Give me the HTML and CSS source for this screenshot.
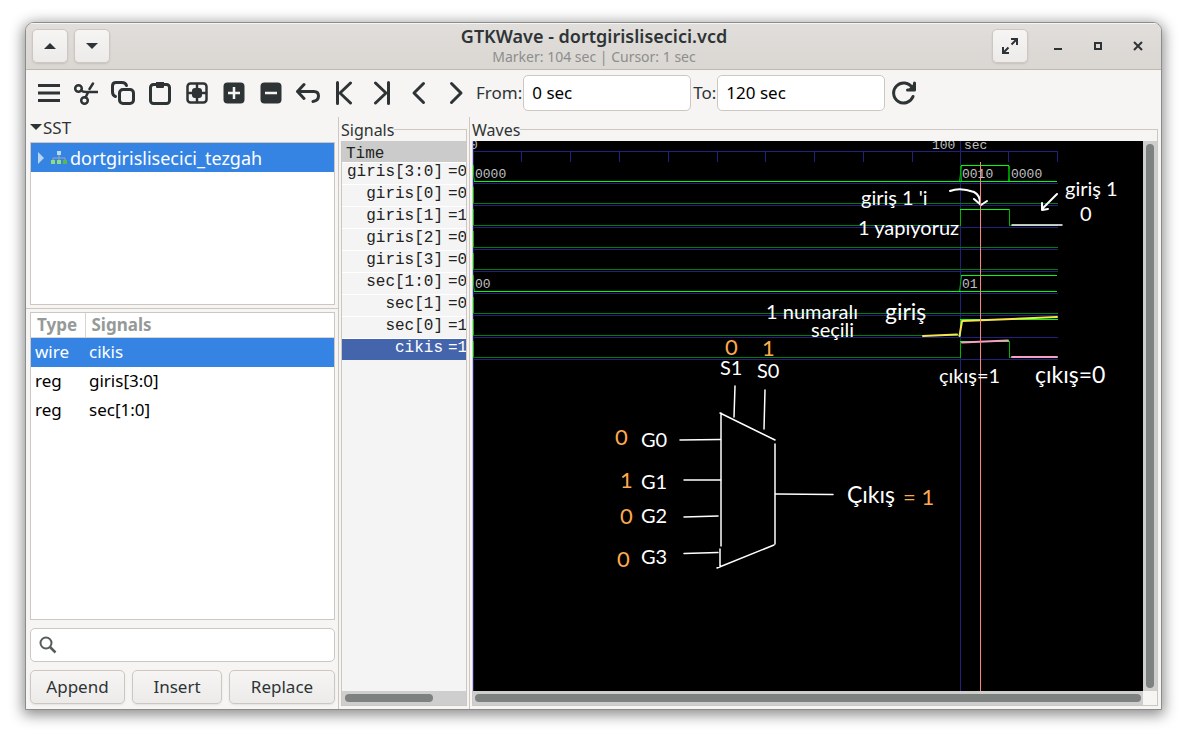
FILE: index.html
```html
<!DOCTYPE html>
<html lang="en">
<head>
<meta charset="utf-8">
<title>GTKWave - dortgirislisecici.vcd</title>
<link rel="stylesheet" href="styles.css">
</head>
<body>
<main class="window">
  <header class="titlebar">
    <div class="title-side">
      <button class="hbtn" aria-label="Previous"><svg width="12" height="12" viewBox="0 0 12 12"><path d="M0 9L6 3L12 9Z" fill="#2e3436"/></svg></button>
      <button class="hbtn" aria-label="Next"><svg width="12" height="12" viewBox="0 0 12 12"><path d="M0 3L6 9L12 3Z" fill="#2e3436"/></svg></button>
    </div>
    <div class="title-text">
      <h1 class="title">GTKWave - dortgirislisecici.vcd</h1>
      <p class="subtitle">Marker: 104 sec&nbsp;|&nbsp;Cursor: 1 sec</p>
    </div>
    <div class="title-side title-end">
      <button class="hbtn" aria-label="Fullscreen"><svg width="16" height="16" viewBox="0 0 16 16" fill="none" stroke="#2e3436" stroke-width="2"><path d="M9 1H15V7M15 1L9.500 6.500M7 15H1V9M1 15L6.500 9.500"/></svg></button>
      <button class="wbtn" aria-label="Minimize"><svg width="16" height="16" viewBox="0 0 16 16"><path d="M4 10H12V12H4Z" fill="#2e3436"/></svg></button>
      <button class="wbtn" aria-label="Maximize"><svg width="16" height="16" viewBox="0 0 16 16" fill="none" stroke="#2e3436" stroke-width="2"><path d="M5 5H11V11H5Z"/></svg></button>
      <button class="wbtn" aria-label="Close"><svg width="16" height="16" viewBox="0 0 16 16" fill="none" stroke="#2e3436" stroke-width="2"><path d="M4 4L12 12M12 4L4 12"/></svg></button>
    </div>
  </header>

  <div class="toolbar">
    <button class="tool" aria-label="Menu"><svg viewBox="0 0 24 24" class="butt"><path d="M1 4.500H23M1 12H23M1 19.500H23"/></svg></button>
    <button class="tool" aria-label="Cut"><svg viewBox="0 0 24 24" class="thin"><circle cx="4.500" cy="7.500" r="3.300"/><circle cx="10.500" cy="19.500" r="3.300"/><path d="M7 9.500Q9 11 12 11H23.500M11.500 16.500L14 11.500M15.500 8L19 2.500"/></svg></button>
    <button class="tool" aria-label="Copy"><svg viewBox="0 0 24 24"><rect x="8.500" y="8.500" width="14" height="14" rx="3.500"/><path d="M4.500 15.500Q1.500 14.500 1.500 11V5Q1.500 1.500 5 1.500H11Q14.500 1.500 15.500 4.500"/></svg></button>
    <button class="tool" aria-label="Paste"><svg viewBox="0 0 24 24"><rect x="2.500" y="3.500" width="19" height="19" rx="3"/><path d="M8 1H16V6Q16 7 15 7H9Q8 7 8 6Z" fill="#2e3436" stroke="none"/></svg></button>
    <button class="tool" aria-label="Zoom fit"><svg viewBox="0 0 24 24" class="thin"><rect x="2.500" y="2.500" width="19" height="19" rx="3"/><path d="M12 3V21M3 12H21"/><rect x="7" y="7" width="10" height="10" rx="3" fill="#2e3436" stroke="none"/></svg></button>
    <button class="tool" aria-label="Zoom in"><svg viewBox="0 0 24 24" class="butt thin"><rect x="1.500" y="1.500" width="21" height="21" rx="4" fill="#2e3436" stroke="none"/><path d="M12 6V18M6 12H18" stroke="#f6f5f3"/></svg></button>
    <button class="tool" aria-label="Zoom out"><svg viewBox="0 0 24 24" class="butt thin"><rect x="1.500" y="1.500" width="21" height="21" rx="4" fill="#2e3436" stroke="none"/><path d="M6 12H18" stroke="#f6f5f3"/></svg></button>
    <button class="tool" aria-label="Undo"><svg viewBox="0 0 24 24"><path d="M8 3.500L1.500 10.500L8 17.500M2 10.500H18Q22.500 10.500 22.500 15T17 20.500"/></svg></button>
    <button class="tool" aria-label="To start"><svg viewBox="0 0 24 24"><path d="M4.500 1.500V22.500M17.500 2L7 12L17.500 22"/></svg></button>
    <button class="tool" aria-label="To end"><svg viewBox="0 0 24 24"><path d="M18.500 1.500V22.500M5.500 2L16 12L5.500 22"/></svg></button>
    <button class="tool" aria-label="Back"><svg viewBox="0 0 24 24"><path d="M16.500 2.500L7 12L16.500 21.500"/></svg></button>
    <button class="tool" aria-label="Forward"><svg viewBox="0 0 24 24"><path d="M7.500 2.500L17 12L7.500 21.500"/></svg></button>
    <label class="range-label" for="from">From:</label>
    <input class="range" id="from" type="text" value="0 sec">
    <label class="range-label" for="to">To:</label>
    <input class="range" id="to" type="text" value="120 sec">
    <button class="tool" aria-label="Reload"><svg viewBox="0 0 24 24"><path d="M21 15.500A10 10 0 1 1 20 6.500"/><path d="M22.500 2V9H15.500"/><path d="M22 2V9H16Z" fill="#2e3436" stroke="none"/></svg></button>
  </div>

  <div class="body">
    <section class="left">
      <div class="sst"><svg width="12" height="12" viewBox="0 0 12 12"><path d="M0 2L6 8L12 2Z" fill="#2e3436"/></svg><span>SST</span></div>
      <div class="box tree">
        <div class="tree-row">
          <svg width="8" height="12" viewBox="0 0 8 12"><path d="M1 0L7 6L1 12Z" fill="#b8d4f5"/></svg>
          <svg width="18" height="14" viewBox="0 0 18 14"><path d="M9 4V10M3 9V7H15V9" fill="none" stroke="#9aa7b5"/><rect x="7" y="0" width="4" height="4" fill="#b9dcf5"/><rect x="1" y="9" width="4" height="4" fill="#8fdc82"/><rect x="7" y="9" width="4" height="4" fill="#8fdc82"/><rect x="13" y="9" width="4" height="4" fill="#57b94f"/></svg>
          <span>dortgirislisecici_tezgah</span>
        </div>
      </div>
      <div class="hsep"></div>
      <div class="box list">
        <table class="signals-table">
          <thead><tr><th class="type-col">Type</th><th>Signals</th></tr></thead>
          <tbody>
            <tr class="selected"><td>wire</td><td>cikis</td></tr>
            <tr><td>reg</td><td>giris[3:0]</td></tr>
            <tr><td>reg</td><td>sec[1:0]</td></tr>
          </tbody>
        </table>
      </div>
      <div class="search">
        <svg width="18" height="18" viewBox="0 0 18 18" fill="none" stroke="#555c5c" stroke-width="2"><circle cx="7" cy="7" r="5.500"/><path d="M11 11L16.500 16.500" stroke-width="2.500"/></svg>
        <input type="search" aria-label="Filter signals">
      </div>
      <div class="actions">
        <button>Append</button><button>Insert</button><button>Replace</button>
      </div>
    </section>

    <section class="pane names">
      <div class="legend"><span>Signals</span></div>
      <div class="frame">
        <div class="name-list">
          <div class="time">Time</div>
          <div class="name"><span>giris[3:0]</span><span>=0</span></div>
          <div class="name"><span>giris[0]</span><span>=0</span></div>
          <div class="name"><span>giris[1]</span><span>=1</span></div>
          <div class="name"><span>giris[2]</span><span>=0</span></div>
          <div class="name"><span>giris[3]</span><span>=0</span></div>
          <div class="name"><span>sec[1:0]</span><span>=0</span></div>
          <div class="name"><span>sec[1]</span><span>=0</span></div>
          <div class="name"><span>sec[0]</span><span>=1</span></div>
          <div class="name active"><span>cikis</span><span>=1</span></div>
        </div>
        <div class="hscroll"><div class="thumb short"></div></div>
      </div>
    </section>

    <section class="pane waves">
      <div class="legend"><span>Waves</span></div>
      <div class="frame wave-frame">
        <div class="canvas">
          <svg width="670" height="550" viewBox="473 141 670 550" fill="none">
            <g stroke="#202080">
              <path d="M473 151.500H1058M473.500 141V691M960.500 141V691"/>
              <path d="M521.500 152V162M570.500 152V162M619.500 152V162M668.500 152V162M717.500 152V162M765.500 152V162M814.500 152V162M863.500 152V162M912.500 152V162M1008.500 152V162M1057.500 152V162"/>
              <path d="M473 183.500H1058M473 205.500H1058M473 227.500H1058M473 249.500H1058M473 271.500H1058M473 293.500H1058M473 315.500H1058M473 337.500H1058M473 359.500H1058"/>
            </g>
            <g stroke="#008000">
              <path d="M473 203.500H1058M473 225.500H960M1009 225.500H1058M473 247.500H1058M473 269.500H1058M473 313.500H1058M473 335.500H960M473 357.500H960M1009 357.500H1058"/>
            </g>
            <g stroke="#00b400">
              <path d="M473.500 165V175L474.500 181M473.500 187V203M473.500 209V225M473.500 231V247M473.500 253V269M473.500 275V285L474.500 291M473.500 297V313M473.500 319V335M473.500 341V357"/>
              <path d="M960.500 226V209M1009.500 209V226M960.500 336V319M960.500 358V341M1009.500 341V358M959.500 181L961.500 166M961.500 181L960.500 166M1008.500 166L1009.500 181M1009.500 166L1008.500 181M959.500 291L961.500 276"/>
            </g>
            <g stroke="#00ff00">
              <path d="M474 181.500H1057M961 165.500H1009M960 209.500H1009M474 291.500H1057M961 275.500H1057M960 319.500H1058M960 341.500H1009"/>
            </g>
            <g class="wave-text">
              <text x="470" y="149">0</text><text x="932" y="149">100</text><text x="964" y="149">sec</text>
              <text x="475" y="178">0000</text><text x="962" y="178">0010</text><text x="1011" y="178">0000</text>
              <text x="475" y="288">00</text><text x="962" y="288">01</text>
            </g>
            <g stroke-linecap="round" stroke-linejoin="round" stroke-width="2">
              <path stroke="#f5e650" d="M923 336L957 334.500M959.500 336L962 321L1057 317"/>
              <path stroke="#f5a0c0" d="M962 342.500L1008 340.500M1012 357L1057 357"/>
              <path stroke="#fff" d="M950 191Q960 187 974 192Q980 195 980 203M974 199L981 205L987 201M1057 194L1042 209M1042 203V210L1048 209"/>
              <path stroke="#fff" stroke-width="1.500" d="M1012 225H1062M721 413V546M720 549V567M720 413L775 440M775 444V544M774 545L717 568M735 386L734 417M765 390L764 429M680 440L720 439.500M684 480H721M684 517L718 516M684 553.500L718 552.500M776 494L833 494.500"/>
            </g>
            <path stroke="#ff8080" d="M980.500 162V691"/>
            <g class="note">
              <text x="861" y="205">giriş 1 'i</text>
              <text x="858" y="235">1 yapıyoruz</text>
              <text x="1065" y="196">giriş 1</text>
              <text x="1080" y="221">0</text>
              <text x="766" y="319">1 numaralı</text><text class="large" x="885" y="320">giriş</text>
              <text x="811" y="337">seçili</text>
              <text x="939" y="383">çıkış=1</text>
              <text class="large" x="1035" y="383">çıkış=0</text>
              <text x="720" y="375">S1</text><text x="757" y="378">S0</text>
              <text x="641" y="447">G0</text><text x="641" y="489">G1</text><text x="641" y="523">G2</text><text x="641" y="564">G3</text>
              <text class="large" x="847" y="503">Çıkış</text>
            </g>
            <g class="note bit">
              <text x="725" y="355">0</text><text x="762" y="356">1</text>
              <text x="615" y="445">0</text><text x="620" y="488">1</text><text x="620" y="524">0</text><text x="617" y="567">0</text>
              <text x="903" y="505">= 1</text>
            </g>
          </svg>
        </div>
        <div class="vscroll"><div class="thumb"></div></div>
        <div class="hscroll"><div class="thumb"></div></div>
        <div class="corner"></div>
      </div>
    </section>
  </div>
</main>
</body>
</html>
```
FILE: styles.css
```css
* { box-sizing: border-box; }

body {
  margin: 0;
  height: 100vh;
  padding: 22px 25px 28px;
  background: #fff;
  font-family: "Noto Sans", "Open Sans", sans-serif;
  font-size: 17px;
  line-height: 22px;
  color: #2e3436;
}

button, input { font: inherit; color: inherit; }
svg { display: block; flex: none; }

.window {
  display: flex;
  flex-direction: column;
  height: 100%;
  border: 1px solid #8b8d8d;
  border-radius: 9px 9px 0 0;
  background: #f6f5f3;
  box-shadow: 0 3px 14px 2px rgba(0, 0, 0, 0.45);
  overflow: hidden;
}

.titlebar {
  display: flex;
  align-items: center;
  flex: none;
  height: 47px;
  padding: 0 5px 0 6px;
  border-bottom: 1px solid #bfb8b1;
  background: linear-gradient(#e1dedb, #dad6d2);
  box-shadow: inset 0 1px #f6f5f4;
}

.title-side { display: flex; flex: 1; gap: 6px; }
.title-end { justify-content: flex-end; gap: 4px; }
.title-text { text-align: center; }
.title { margin: 0; font-size: 18px; line-height: 22px; font-weight: 600; }
.subtitle { margin: 0; font-size: 14px; line-height: 20px; color: #8c8e8c; }

.hbtn {
  display: grid;
  place-items: center;
  width: 36px;
  height: 34px;
  padding: 0;
  border: 1px solid #cdc7c2;
  border-radius: 5px;
  background: linear-gradient(#f6f5f4, #edebe9);
  box-shadow: 0 1px 2px rgba(0, 0, 0, 0.1);
}

.wbtn {
  display: grid;
  place-items: center;
  width: 36px;
  height: 34px;
  padding: 0;
  border: 0;
  background: none;
}

.title-end .hbtn { margin-right: 8px; }

.toolbar {
  display: flex;
  align-items: center;
  flex: none;
  height: 47px;
  padding: 0 0 2px 4px;
}

.tool {
  display: grid;
  place-items: center;
  width: 37px;
  height: 36px;
  padding: 0;
  border: 0;
  background: none;
}

.tool svg {
  width: 24px;
  height: 24px;
  fill: none;
  stroke: #2e3436;
  stroke-width: 3;
  stroke-linecap: round;
  stroke-linejoin: round;
}
.tool .thin { stroke-width: 2.5; }
.tool .butt { stroke-linecap: butt; }

.range-label { padding: 0 1px 0 2px; white-space: nowrap; }

.range {
  width: 168px;
  height: 36px;
  padding: 0 8px;
  border: 1px solid #cdc7c2;
  border-radius: 5px;
  background: #fff;
  color: #000;
}

.body { display: flex; flex: 1; min-height: 0; }

.left {
  display: flex;
  flex-direction: column;
  flex: none;
  width: 313px;
  padding: 0 3px 5px 4px;
  border-right: 1px solid #cdc7c2;
}

.sst { display: flex; align-items: center; gap: 1px; height: 25px; padding-bottom: 3px; }
.box { border: 1px solid #cdc7c2; background: #fff; }
.tree { flex: 162 1 0; }

.tree-row {
  display: flex;
  align-items: center;
  height: 29px;
  padding-left: 6px;
  gap: 2px;
  background: #3584e4;
  color: #fff;
  font-size: 18px;
}
.tree-row svg + svg { margin-left: 3px; }

.hsep { height: 1px; margin: 3px -3px 3px -4px; background: #cdc7c2; }
.list { flex: 309 1 0; }

.signals-table { width: 100%; border-collapse: collapse; color: #000; }
.signals-table th, .signals-table td { height: 29px; padding: 0 4px; text-align: left; }
.signals-table th { height: 25px; padding: 0 6px; border-bottom: 1px solid #d8d4d0; color: #959a98; }
.signals-table .type-col { width: 54px; border-right: 1px solid #d8d4d0; }
.signals-table .selected { background: #3584e4; color: #fff; }

.search {
  display: flex;
  align-items: center;
  flex: none;
  height: 34px;
  margin: 8px 0;
  padding: 0 8px;
  border: 1px solid #cdc7c2;
  border-radius: 5px;
  background: #fff;
}
.search input { flex: 1; min-width: 0; border: 0; outline: 0; background: none; }

.actions { display: grid; grid-template-columns: 95fr 90fr 106fr; flex: none; gap: 7px; }
.actions button {
  height: 34px;
  padding: 0 8px;
  border: 1px solid #cdc7c2;
  border-radius: 5px;
  background: linear-gradient(#f6f5f4, #edebe9);
  box-shadow: 0 1px 2px rgba(0, 0, 0, 0.08);
}

.pane { display: flex; flex-direction: column; padding: 0 2px 3px; min-width: 0; }
.names { flex: none; width: 131px; border-right: 1px solid #cdc7c2; }
.waves { flex: 1; padding-right: 3px; }

.legend { display: flex; flex: none; height: 24px; line-height: 26px; font-size: 16px; }
.legend::after {
  content: "";
  flex: 1;
  margin-top: 12px;
  border: 1px solid #cdc7c2;
  border-width: 1px 1px 0 0;
}

.frame {
  display: flex;
  flex-direction: column;
  flex: 1;
  min-height: 0;
  border: 1px solid #cdc7c2;
  border-top: 0;
}

.name-list {
  flex: 1;
  min-height: 0;
  overflow: hidden;
  background: #f4f4f4;
  font-family: "Liberation Mono", monospace;
  font-size: 16px;
  line-height: 19px;
  color: #222;
}
.time { height: 21px; padding: 4px 4px 0; background: #cbcbcb; }
.name { display: flex; gap: 5px; height: 22px; border-top: 1px solid #fff; }
.name span:first-child { width: 101px; text-align: right; flex: none; }
.name.active { background: #4464ac; color: #fff; }

.hscroll { flex: none; height: 14px; padding: 3px 2px; background: #cecece; }
.hscroll .thumb { height: 8px; border-radius: 4px; background: #7d8180; }
.hscroll .short { width: 73%; margin-left: 1px; }
.vscroll { padding: 3px; background: #cecece; }
.vscroll .thumb { height: 100%; border-radius: 4px; background: #7d8180; }

.wave-frame {
  display: grid;
  grid-template-columns: minmax(0, 1fr) 14px;
  grid-template-rows: minmax(0, 1fr) 14px;
}
.canvas { overflow: hidden; background: #000; }

.wave-text { fill: #c0c0c0; font-family: "Liberation Mono", monospace; font-size: 13px; }
.note { fill: #fff; font-family: Lato, sans-serif; font-size: 20px; }
.note .large { font-size: 23px; }
.bit { fill: #ffa94d; font-size: 22px; }
```
